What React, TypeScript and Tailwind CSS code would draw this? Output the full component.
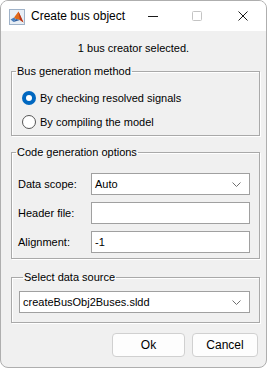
import React from 'react';

const font = { fontFamily: '"Liberation Sans", Arial, sans-serif' };

function MatlabIcon() {
  return (
    <svg width="16" height="16" viewBox="0 0 16 16">
      <rect x="0.5" y="0.5" width="15" height="15" fill="#e8eef5" stroke="#9fb2c8" />
      <path d="M1.5 10.5 L5 8.5 L7 10 L4.5 13 Z" fill="#4a7ebb" />
      <path d="M5 8.5 L9.5 2.5 L14.5 13.5 L11 11 L7 10 Z" fill="#e06a1b" />
      <path d="M9.5 2.5 L11 11 L14.5 13.5 Z" fill="#b8321a" />
      <path d="M4.5 13 L7 10 L11 11 Z" fill="#2f5f9e" />
    </svg>
  );
}

function Chevron() {
  return (
    <svg width="9" height="5" viewBox="0 0 9 5" className="shrink-0">
      <path d="M0.5 0.5 L4.5 4.5 L8.5 0.5" fill="none" stroke="#707070" strokeWidth="1" />
    </svg>
  );
}

function Group({ title, className, children }: { title: string; className: string; children: React.ReactNode }) {
  return (
    <fieldset
      className={`ml-[10px] mr-[6px] border border-[#a9a9a9] shadow-[inset_1px_1px_0_#ffffff,1px_1px_0_#ffffff] ${className}`}
    >
      <legend className="ml-[4px] px-[1px] text-[11px] leading-[13px] text-black">{title}</legend>
      {children}
    </fieldset>
  );
}

function Radio({ checked, label }: { checked?: boolean; label: string }) {
  return (
    <div className="flex h-[20px] items-center pl-[10px]">
      {checked ? (
        <span className="flex h-[14px] w-[14px] items-center justify-center rounded-full bg-[#0067c0]">
          <span className="h-[6px] w-[6px] rounded-full bg-white" />
        </span>
      ) : (
        <span className="h-[14px] w-[14px] rounded-full border border-[#555555] bg-white" />
      )}
      <span className="ml-[4px] text-[11px] text-black">{label}</span>
    </div>
  );
}

function Field({ label, children }: { label: string; children: React.ReactNode }) {
  return (
    <div className="flex h-[22px] items-center">
      <span className="w-[79px] pl-[6px] text-[11px] text-black">{label}</span>
      {children}
    </div>
  );
}

function Dropdown({ value, className }: { value: string; className: string }) {
  return (
    <div
      className={`flex h-[22px] items-center justify-between border border-[#a0a0a0] bg-white pl-[3px] pr-[8px] text-[11px] text-black ${className}`}
    >
      <span>{value}</span>
      <Chevron />
    </div>
  );
}

function TextBox({ value }: { value?: string }) {
  return (
    <div className="flex h-[22px] w-[159px] items-center border border-[#a0a0a0] bg-white pl-[3px] text-[11px] text-black">
      {value}
    </div>
  );
}

export default function App() {
  return (
    <div className="h-[370px] w-[267px] bg-white" style={font}>
      <div className="flex h-[368px] flex-col overflow-hidden rounded-[8px] border border-[#aeaeae] bg-[#f0f0f0]">
        <div className="flex h-[30px] shrink-0 items-center bg-white">
          <div className="ml-[8px] mt-[1px]">
            <MatlabIcon />
          </div>
          <span className="ml-[6px] text-[12px] text-black">Create bus object</span>
          <div className="ml-auto flex items-center">
            <svg width="10" height="10" viewBox="0 0 10 10" className="mr-[34px]">
              <path d="M0 5.5 H10" stroke="#1a1a1a" strokeWidth="1" />
            </svg>
            <svg width="10" height="10" viewBox="0 0 10 10" className="mr-[36px]">
              <rect x="0.5" y="0.5" width="9" height="9" rx="1" fill="none" stroke="#c4c4c4" />
            </svg>
            <svg width="10" height="10" viewBox="0 0 10 10" className="mr-[18px]">
              <path d="M0.5 0.5 L9.5 9.5 M9.5 0.5 L0.5 9.5" stroke="#1a1a1a" strokeWidth="1" />
            </svg>
          </div>
        </div>

        <div className="mt-[10px] text-center text-[11px] leading-[14px] text-black">1 bus creator selected.</div>

        <Group title="Bus generation method" className="mt-[10px] flex flex-col gap-[4px] pb-[3px] pt-[10px]">
          <Radio checked label="By checking resolved signals" />
          <Radio label="By compiling the model" />
        </Group>

        <Group title="Code generation options" className="mt-[10px] flex flex-col gap-[7px] pb-[5px] pt-[14px]">
          <Field label="Data scope:">
            <Dropdown value="Auto" className="w-[159px]" />
          </Field>
          <Field label="Header file:">
            <TextBox />
          </Field>
          <Field label="Alignment:">
            <TextBox value="-1" />
          </Field>
        </Group>

        <Group title="Select data source" className="mt-[12px] px-[7px] pb-[9px] pt-[7px]">
          <Dropdown value="createBusObj2Buses.sldd" className="w-[231px]" />
        </Group>

        <div className="mr-[8px] mt-[10px] flex justify-end gap-[7px]">
          <button className="h-[24px] w-[73px] rounded-[4px] border border-[#d0d0d0] bg-[#fdfdfd] text-[12px] text-black">
            Ok
          </button>
          <button className="h-[24px] w-[66px] rounded-[4px] border border-[#d0d0d0] bg-[#fdfdfd] text-[12px] text-black">
            Cancel
          </button>
        </div>
      </div>
    </div>
  );
}
